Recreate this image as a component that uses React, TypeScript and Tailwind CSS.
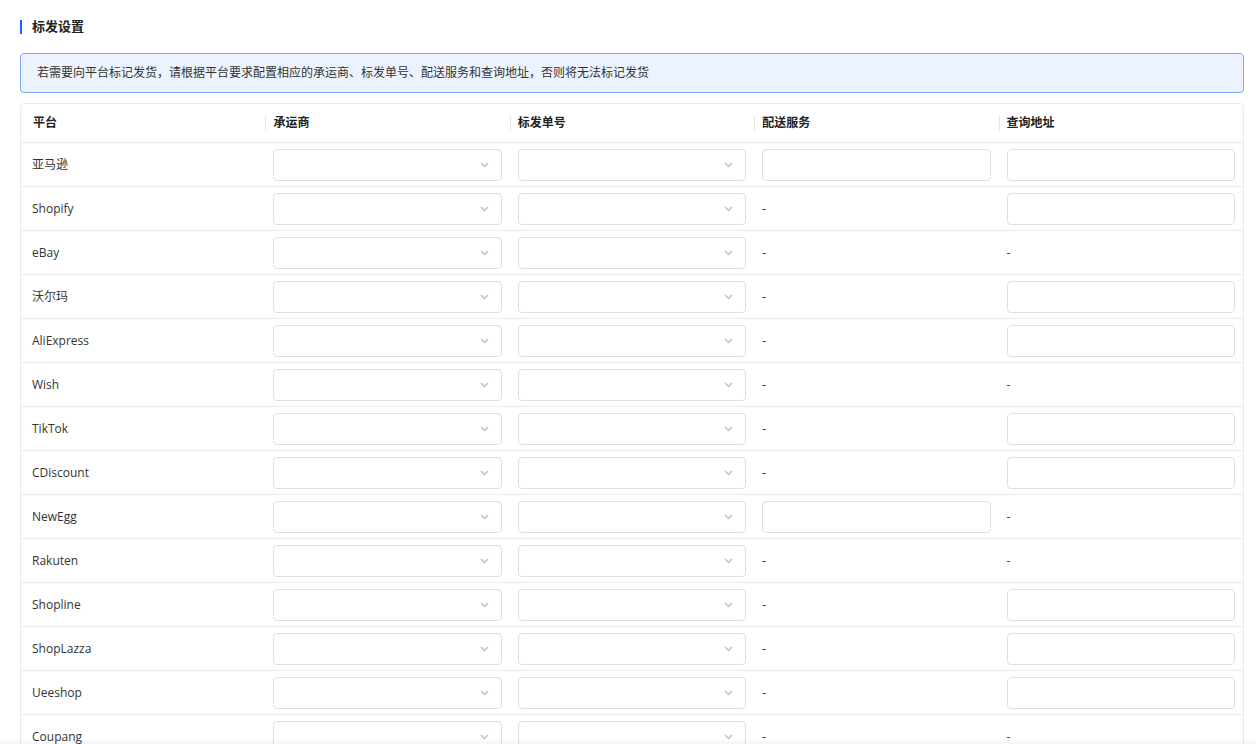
import React from "react";

type Row = { name: string; svc: boolean; query: boolean };

const rows: Row[] = [
  { name: "亚马逊", svc: true, query: true },
  { name: "Shopify", svc: false, query: true },
  { name: "eBay", svc: false, query: false },
  { name: "沃尔玛", svc: false, query: true },
  { name: "AliExpress", svc: false, query: true },
  { name: "Wish", svc: false, query: false },
  { name: "TikTok", svc: false, query: true },
  { name: "CDiscount", svc: false, query: true },
  { name: "NewEgg", svc: true, query: false },
  { name: "Rakuten", svc: false, query: false },
  { name: "Shopline", svc: false, query: true },
  { name: "ShopLazza", svc: false, query: true },
  { name: "Ueeshop", svc: false, query: true },
  { name: "Coupang", svc: false, query: false },
];

function Select() {
  return (
    <div className="h-[32px] w-full rounded-[4px] border border-[#dcdfe6] bg-white flex items-center justify-end pr-[12px]">
      <svg width="9" height="6" viewBox="0 0 9 6" fill="none">
        <path d="M1 1l3.5 3.5L8 1" stroke="#b8bcc4" strokeWidth="1.3" />
      </svg>
    </div>
  );
}

function Input() {
  return <div className="h-[32px] w-full rounded-[4px] border border-[#dcdfe6] bg-white" />;
}

function Dash() {
  return <span className="text-[12px] text-[#333]">-</span>;
}

function HeadCell({ label, sep }: { label: string; sep?: boolean }) {
  return (
    <div className="flex items-center h-full">
      {sep && <div className="w-px h-[16px] bg-[#e4e6eb]" />}
      <span className={sep ? "pl-[7px]" : "pl-[12px]"}>{label}</span>
    </div>
  );
}

export default function App() {
  return (
    <div
      className="h-[744px] w-[1256px] overflow-hidden bg-white pl-[20px] pr-[12px] pt-[19px] text-[#333] relative"
      style={{ fontFamily: '"Open Sans", "Noto Sans CJK SC", sans-serif' }}
    >
      <div className="flex items-center h-[15px]">
        <div className="w-[2px] h-[14px] bg-[#1664ff]" />
        <span className="ml-[10px] text-[13px] font-bold text-[#222]">标发设置</span>
      </div>

      <div className="mt-[19px] h-[40px] rounded-[4px] border border-[#7ba7f6] bg-[#ecf3fe] flex items-center pl-[16px] text-[12px] text-[#333]">
        若需要向平台标记发货，请根据平台要求配置相应的承运商、标发单号、配送服务和查询地址，否则将无法标记发货
      </div>

      <div className="mt-[10px] rounded-[4px] border border-[#e8eaee] text-[12px]">
        <div className="grid grid-cols-5 h-[39px] border-b border-[#e8eaee] font-bold text-[#222]">
          <HeadCell label="平台" />
          <HeadCell label="承运商" sep />
          <HeadCell label="标发单号" sep />
          <HeadCell label="配送服务" sep />
          <HeadCell label="查询地址" sep />
        </div>
        {rows.map((r) => (
          <div key={r.name} className="grid grid-cols-5 h-[44px] border-b border-[#e8eaee] items-center">
            <div className="pl-[11px] text-[#333]">{r.name}</div>
            <div className="px-[8px]">
              <Select />
            </div>
            <div className="px-[8px]">
              <Select />
            </div>
            <div className="px-[8px]">{r.svc ? <Input /> : <Dash />}</div>
            <div className="px-[8px]">{r.query ? <Input /> : <Dash />}</div>
          </div>
        ))}
      </div>

      <div className="absolute left-0 right-0 bottom-[-20px] h-[20px] bg-white shadow-[0_-2px_4px_rgba(0,0,0,0.05)]" />
    </div>
  );
}
